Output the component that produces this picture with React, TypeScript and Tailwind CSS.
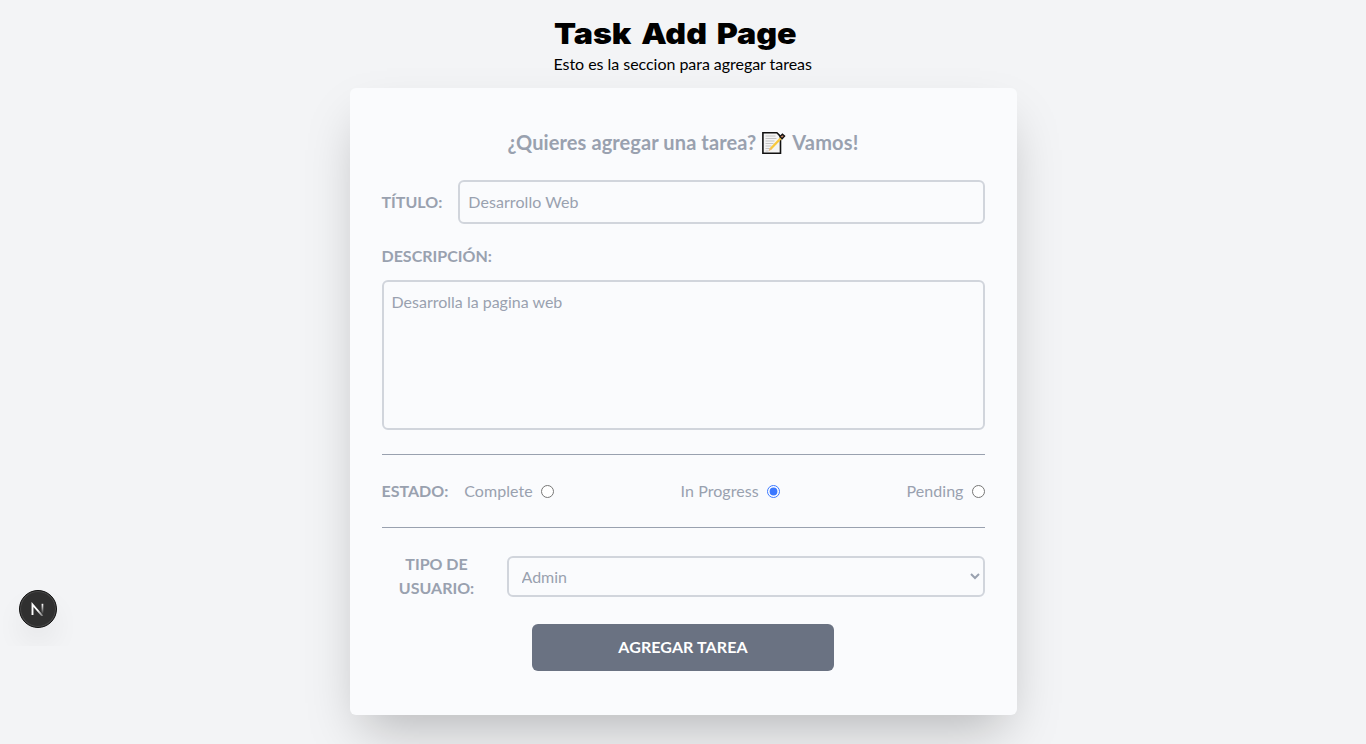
import { useState } from 'react';

const states = ['Complete', 'In Progress', 'Pending'];

function NoteIcon() {
  return (
    <svg className="mt-px h-6 w-6 shrink-0" viewBox="0 0 24 24" fill="none">
      <path d="M.9 1.8h14l3.6 3.6v16.8H.9z" fill="#f4f4f4" stroke="#111" strokeWidth="1.6" />
      <path d="M3.5 5h10M3.5 7.5h11M3.5 10h9M3.5 12.5h8M3.5 15h6M3.5 17.5h4M3.5 20h3" stroke="#c4c4c4" strokeWidth="1" />
      <path d="M8 18.5 20 6" stroke="#f8c83c" strokeWidth="2.4" />
      <path d="m7 19.6 2-2.2" stroke="#e8b688" strokeWidth="1.4" />
      <path d="m18 5.6 2.4-2.4 2.2 1.8-2.5 2.7z" fill="#c98468" stroke="#111" strokeWidth="1.3" />
    </svg>
  );
}

function DevBadge() {
  return (
    <div className="absolute top-[590px] left-0 h-14 w-[80px] overflow-hidden">
      <div className="absolute top-0 left-[19px] flex h-[38px] w-[38px] items-center justify-center rounded-full border border-[#111] bg-[#303030] shadow-[inset_0_0_0_1px_#4a4a4a,0_16px_32px_-8px_rgba(0,0,0,0.16)]">
        <svg className="h-[14px] w-[14px]" viewBox="0 0 14 14" fill="none">
          <defs>
            <linearGradient id="diag" x1="7" y1="8" x2="12" y2="14" gradientUnits="userSpaceOnUse">
              <stop stopColor="#fff" />
              <stop offset="1" stopColor="#fff" stopOpacity="0.3" />
            </linearGradient>
            <linearGradient id="stem" x1="0" y1="2" x2="0" y2="12" gradientUnits="userSpaceOnUse">
              <stop stopColor="#fff" />
              <stop offset="1" stopColor="#fff" stopOpacity="0" />
            </linearGradient>
          </defs>
          <path d="M1.5 13V2.5L11.5 14" stroke="url(#diag)" strokeWidth="1.9" />
          <path d="M10.6 1.8h1.7v10.7h-1.7z" fill="url(#stem)" />
        </svg>
      </div>
    </div>
  );
}

export default function App() {
  const [status, setStatus] = useState('In Progress');
  return (
    <main className="relative flex h-[744px] flex-col items-center overflow-hidden bg-gray-100 pt-4 font-['Lato',sans-serif] text-base text-black">
      <DevBadge />
      <header className="h-[72px] w-[259px]">
        <h1 className="h-9 origin-left scale-x-[1.11] font-['Inter',sans-serif] text-[29px] leading-9 font-black [word-spacing:3px] whitespace-nowrap">Task Add Page</h1>
        <p className="leading-6 tracking-[-0.04px] whitespace-nowrap">Esto es la seccion para agregar tareas</p>
      </header>
      <form
        className="flex h-[627px] w-[667px] shrink-0 flex-col rounded-md bg-[#fafbfd] px-8 pt-10 text-gray-400 shadow-2xl"
        onSubmit={(e) => e.preventDefault()}
      >
        <h2 className="flex h-7 items-center justify-center gap-[6px] text-xl font-bold">
          <span className="tracking-[0.1px]">¿Quieres agregar una tarea?</span>
          <NoteIcon />
          <span className="tracking-[0.2px]">Vamos!</span>
        </h2>
        <div className="mt-6 flex items-center gap-4">
          <label htmlFor="title" className="font-bold">TÍTULO:</label>
          <input id="title" placeholder="Desarrollo Web" className="h-11 min-w-0 flex-1 rounded-md border-2 border-gray-300 px-2 pb-[2px] tracking-[0.07px] placeholder:text-gray-400" />
        </div>
        <label htmlFor="description" className="mt-5 h-6 font-bold">DESCRIPCIÓN:</label>
        <textarea id="description" placeholder="Desarrolla la pagina web" className="mt-3 h-[150px] shrink-0 resize-none rounded-md border-2 border-gray-300 p-2 placeholder:text-gray-400" />
        <hr className="mt-6 border-gray-400" />
        <div className="flex h-[72px] shrink-0 items-center gap-4">
          <span className="font-bold">ESTADO:</span>
          <div className="flex flex-1 justify-between">
            {states.map((s) => (
              <label key={s} className="flex items-center gap-2 tracking-[0.06px]">
                {s}
                <input type="radio" name="status" checked={status === s} onChange={() => setStatus(s)} className="h-[13px] w-[13px] accent-[#3b78ff]" />
              </label>
            ))}
          </div>
        </div>
        <hr className="border-gray-400" />
        <div className="mt-6 flex items-center gap-4">
          <label htmlFor="role" className="w-[109px] pl-px text-center font-bold">TIPO DE USUARIO:</label>
          <select id="role" className="h-[41px] min-w-0 flex-1 rounded-md border-2 border-gray-300 pr-2 pl-[9px]">
            <option>Admin</option>
            <option>User</option>
          </select>
        </div>
        <button className="mt-6 h-[47px] w-[302px] self-center rounded-md bg-gray-500 pb-[2px] font-bold tracking-[0.1px] text-white">AGREGAR TAREA</button>
      </form>
    </main>
  );
}
